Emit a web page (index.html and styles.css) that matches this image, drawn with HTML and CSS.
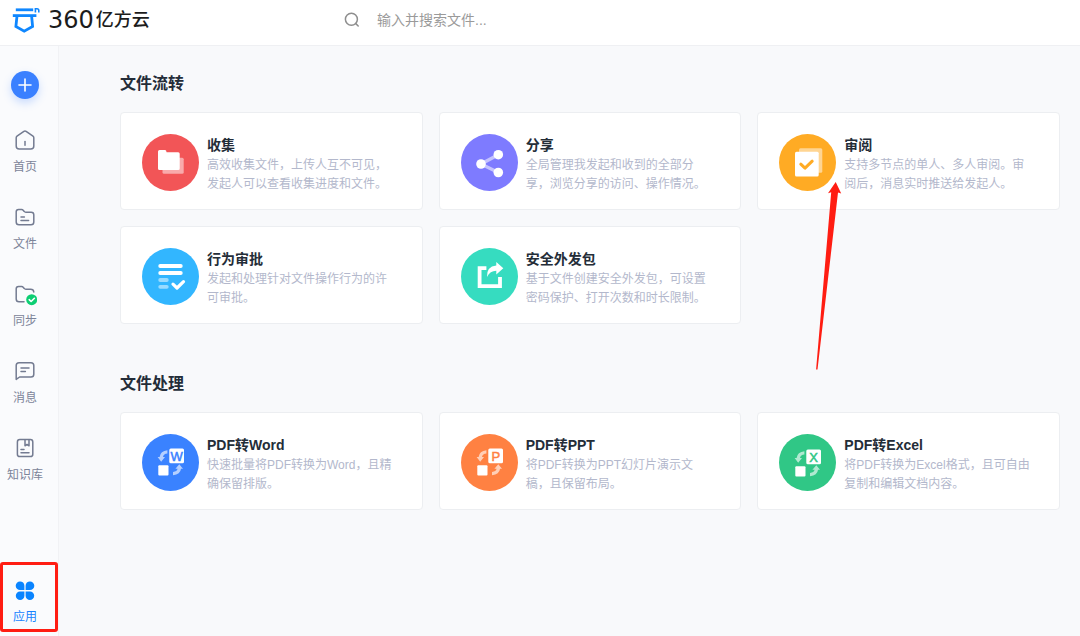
FILE: index.html
```html
<!DOCTYPE html>
<html lang="zh-CN">
<head>
<meta charset="utf-8">
<meta name="viewport" content="width=device-width, initial-scale=1">
<title>360亿方云</title>
<link rel="stylesheet" href="styles.css">
</head>
<body>
<header class="topbar">
  <a class="brand" href="#">
    <svg class="brand-mark" viewBox="0 0 28 26" aria-hidden="true">
      <g fill="none" stroke="#0f87ff" stroke-width="2.8">
        <path d="M3.8 2.8H21.2"/>
        <path d="M.8 8.6H24.4"/>
        <path d="M5 9L3.9 19.4L12.2 24.2L20.6 19.4L19.6 9"/>
        <path d="M23.4 5.4V1.8H25Q26.8 1.8 26.8 3.6V5.4" stroke-width="1.6"/>
      </g>
    </svg>
    <span class="brand-name"><span class="brand-digits">360</span>亿方云</span>
  </a>
  <form class="search" role="search">
    <label for="q" class="search-icon" aria-label="搜索">
      <svg viewBox="0 0 16 16" aria-hidden="true"><g fill="none" stroke="#8e8e8e" stroke-width="1.5" stroke-linecap="round"><circle cx="7.4" cy="7.2" r="6"/><path d="M11.8 11.6L14.2 14"/></g></svg>
    </label>
    <input id="q" type="text" placeholder="输入并搜索文件...">
  </form>
</header>
<div class="layout">
  <nav class="sidebar">
    <button class="add" type="button" aria-label="新建">
      <svg viewBox="0 0 28 28" aria-hidden="true"><path d="M8 14H20M14 8V20" stroke="#fff" stroke-width="1.6" stroke-linecap="round"/></svg>
    </button>
    <a class="nav-item" href="#">
      <svg viewBox="0 0 24 24" aria-hidden="true"><g class="line"><path d="M3.2 8.8Q3.2 7.8 4 7.2L10.9 2.4Q12 1.6 13.1 2.4L20 7.2Q20.8 7.8 20.8 8.8V17Q20.8 20 17.8 20H6.2Q3.2 20 3.2 17Z"/><path d="M12 12.6V16.2"/></g></svg>
      <span>首页</span>
    </a>
    <a class="nav-item" href="#">
      <svg viewBox="0 0 24 24" aria-hidden="true"><g class="line"><path d="M3.2 5.8Q3.2 3.4 5.6 3.4H8.6Q9.6 3.4 10.2 4.2L11.2 5.4Q11.8 6.2 12.8 6.2H18.2Q20.8 6.2 20.8 8.8V16Q20.8 18.8 18 18.8H6Q3.2 18.8 3.2 16Z"/><path d="M8 11H11.4M8 14.4H15.6"/></g></svg>
      <span>文件</span>
    </a>
    <a class="nav-item" href="#">
      <svg viewBox="0 0 24 24" aria-hidden="true"><g class="line"><path d="M11 18.8H6Q3.2 18.8 3.2 16V5.8Q3.2 3.4 5.6 3.4H8.6Q9.6 3.4 10.2 4.2L11.2 5.4Q11.8 6.2 12.8 6.2H17.6Q20.6 6.2 20.8 9"/></g><circle cx="18.7" cy="16.7" r="5.5" fill="#0dce73"/><path d="M16.2 16.7L18.1 18.5L21.4 15.3" fill="none" stroke="#fff" stroke-width="1.6" stroke-linecap="round" stroke-linejoin="round"/></svg>
      <span>同步</span>
    </a>
    <a class="nav-item" href="#">
      <svg viewBox="0 0 24 24" aria-hidden="true"><g class="line"><path d="M3.2 19.4V5.6Q3.2 2.8 6 2.8H18Q20.8 2.8 20.8 5.6V14.2Q20.8 17 18 17H6.6Z"/><path d="M8 8H16M8 11.4H12.4"/></g></svg>
      <span>消息</span>
    </a>
    <a class="nav-item" href="#">
      <svg viewBox="0 0 24 24" aria-hidden="true"><g class="line"><rect x="4.4" y="2.6" width="15.4" height="17" rx="2.4"/><path d="M12 2.8V8.8L14 7.4L16 8.8V2.8M8 12.6H11M8 15.8H16"/></g></svg>
      <span>知识库</span>
    </a>
    <a class="nav-item nav-item-active" href="#">
      <svg viewBox="0 0 24 24" aria-hidden="true"><g fill="#0a84ff"><path d="M7 2.4A4.3 4.3 0 0 1 11.4 6.7V11H7A4.3 4.3 0 0 1 7 2.4Z"/><path d="M17 2.4A4.3 4.3 0 0 1 17 11H12.6V6.7A4.3 4.3 0 0 1 17 2.4Z"/><path d="M7 12.4H11.4V16.7A4.3 4.3 0 1 1 7 12.4Z"/><path d="M12.6 12.4H17A4.3 4.3 0 1 1 12.6 16.7Z"/></g></svg>
      <span>应用</span>
    </a>
    <div class="highlight"></div>
  </nav>
  <main class="content">
    <section class="group">
      <h2>文件流转</h2>
      <div class="cards">
        <a class="card" href="#">
          <svg class="card-icon" viewBox="0 0 57 57" aria-hidden="true"><circle cx="28.5" cy="28.5" r="28.5" fill="#f25557"/><rect x="20.5" y="23.7" width="21.2" height="16" rx="1.5" fill="#fff" opacity=".5"/><path d="M16 17.5Q16 16 17.5 16H23Q24.3 16 24.6 18.3H36.2Q37.7 18.3 37.7 19.8V34.5Q37.7 36 36.2 36H17.5Q16 36 16 34.5Z" fill="#fff"/></svg>
          <div class="card-text"><h3>收集</h3><p>高效收集文件，上传人互不可见，发起人可以查看收集进度和文件。</p></div>
        </a>
        <a class="card" href="#">
          <svg class="card-icon" viewBox="0 0 57 57" aria-hidden="true"><circle cx="28.5" cy="28.5" r="28.5" fill="#7e7bff"/><path d="M37.3 20.7L20 30L37.3 38.5" fill="none" stroke="#fff" stroke-width="3.4" opacity=".55"/><g fill="#fff"><circle cx="20" cy="30" r="4.8"/><circle cx="37.3" cy="20.7" r="4.8"/><circle cx="37.3" cy="38.5" r="4.8"/></g></svg>
          <div class="card-text"><h3>分享</h3><p>全局管理我发起和收到的全部分享，浏览分享的访问、操作情况。</p></div>
        </a>
        <a class="card" href="#">
          <svg class="card-icon" viewBox="0 0 57 57" aria-hidden="true"><circle cx="28.5" cy="28.5" r="28.5" fill="#ffab24"/><rect x="20" y="14.3" width="23.3" height="24.4" rx="1.5" fill="#fff" opacity=".5"/><rect x="16" y="17.8" width="23.7" height="24.6" rx="1.5" fill="#fff"/><path d="M21.8 30.2L26 34.2L33.2 27.2" fill="none" stroke="#ffab24" stroke-width="3" stroke-linecap="round" stroke-linejoin="round"/></svg>
          <div class="card-text"><h3>审阅</h3><p>支持多节点的单人、多人审阅。审阅后，消息实时推送给发起人。</p></div>
          <svg class="pointer" viewBox="0 0 26 189" aria-hidden="true"><path d="M19.7 0L25.2 11.6L22 10.6L1.5 187.5L.1 187.5L15.2 10.2L12 11.2Z" fill="#ff1d12"/></svg>
        </a>
        <a class="card" href="#">
          <svg class="card-icon" viewBox="0 0 57 57" aria-hidden="true"><circle cx="28.5" cy="28.5" r="28.5" fill="#32b6ff"/><g fill="none" stroke="#fff" stroke-width="3.8" stroke-linecap="round" stroke-linejoin="round"><path d="M18.2 18H38.8M18.2 25H38.8"/><path d="M18.2 32H24.8M18.2 38.8H24.8" opacity=".5"/><path d="M31 36.2L35 40L41.5 33.6" stroke-width="3.2"/></g></svg>
          <div class="card-text"><h3>行为审批</h3><p>发起和处理针对文件操作行为的许可审批。</p></div>
        </a>
        <a class="card" href="#">
          <svg class="card-icon" viewBox="0 0 57 57" aria-hidden="true"><circle cx="28.5" cy="28.5" r="28.5" fill="#36dcc0"/><path d="M25.4 20.2H18.6V38.1H39V29" fill="none" stroke="#fff" stroke-width="3.8"/><path d="M35.3 14L42.3 20.2L35.3 26.4V22.8Q29 22.8 26 29Q25.3 18.4 35.3 17.4Z" fill="#fff"/></svg>
          <div class="card-text"><h3>安全外发包</h3><p>基于文件创建安全外发包，可设置密码保护、打开次数和时长限制。</p></div>
        </a>
      </div>
    </section>
    <section class="group">
      <h2>文件处理</h2>
      <div class="cards">
        <a class="card" href="#">
          <svg class="card-icon" viewBox="0 0 57 57" aria-hidden="true"><circle cx="28.5" cy="28.5" r="28.5" fill="#3a82ff"/><g fill="#fff"><rect x="27.3" y="14.4" width="14.7" height="14.8" rx="1.5"/><rect x="16.3" y="31.2" width="10.2" height="10.2" rx="1"/></g><g fill="#fff" opacity=".62"><path d="M25.4 16.2V19.4Q21.6 19.6 21 23H23L19.2 27.8L15.6 23H17.6Q18.4 16.8 25.4 16.2Z"/><path d="M31 41.2V38Q35 37.6 35.6 34.8H33.4L37.3 30.2L41 34.8H39Q38.4 40.8 31 41.2Z"/></g><text class="glyph" x="34.7" y="26.5" fill="#3a82ff" stroke="#3a82ff">W</text></svg>
          <div class="card-text"><h3>PDF转Word</h3><p>快速批量将PDF转换为Word，且精确保留排版。</p></div>
        </a>
        <a class="card" href="#">
          <svg class="card-icon" viewBox="0 0 57 57" aria-hidden="true"><circle cx="28.5" cy="28.5" r="28.5" fill="#ff8142"/><g fill="#fff"><rect x="27.3" y="14.4" width="14.7" height="14.8" rx="1.5"/><rect x="16.3" y="31.2" width="10.2" height="10.2" rx="1"/></g><g fill="#fff" opacity=".62"><path d="M25.4 16.2V19.4Q21.6 19.6 21 23H23L19.2 27.8L15.6 23H17.6Q18.4 16.8 25.4 16.2Z"/><path d="M31 41.2V38Q35 37.6 35.6 34.8H33.4L37.3 30.2L41 34.8H39Q38.4 40.8 31 41.2Z"/></g><text class="glyph" x="34.9" y="26.5" fill="#ff8142" stroke="#ff8142">P</text></svg>
          <div class="card-text"><h3>PDF转PPT</h3><p>将PDF转换为PPT幻灯片演示文稿，且保留布局。</p></div>
        </a>
        <a class="card" href="#">
          <svg class="card-icon" viewBox="0 0 57 57" aria-hidden="true"><circle cx="28.5" cy="28.5" r="28.5" fill="#30c786"/><g transform="translate(0 1)"><g fill="#fff"><rect x="27.3" y="14.4" width="14.7" height="14.8" rx="1.5"/><rect x="16.3" y="31.2" width="10.2" height="10.2" rx="1"/></g><g fill="#fff" opacity=".62"><path d="M25.4 16.2V19.4Q21.6 19.6 21 23H23L19.2 27.8L15.6 23H17.6Q18.4 16.8 25.4 16.2Z"/><path d="M31 41.2V38Q35 37.6 35.6 34.8H33.4L37.3 30.2L41 34.8H39Q38.4 40.8 31 41.2Z"/></g><text class="glyph" x="34.7" y="26.5" fill="#30c786" stroke="#30c786">X</text></g></svg>
          <div class="card-text"><h3>PDF转Excel</h3><p>将PDF转换为Excel格式，且可自由复制和编辑文档内容。</p></div>
        </a>
      </div>
    </section>
  </main>
</div>
</body>
</html>
```
FILE: styles.css
```css
* {
  box-sizing: border-box;
}

body {
  margin: 0;
  min-height: 100vh;
  display: flex;
  flex-direction: column;
  background: #f8f9fb;
  color: #242d38;
  font-family: "Liberation Sans", "Noto Sans CJK SC", sans-serif;
  font-size: 12px;
}

a {
  color: inherit;
  text-decoration: none;
}

h2,
h3,
p {
  margin: 0;
}

svg {
  display: block;
}

.topbar {
  display: flex;
  align-items: center;
  height: 46px;
  padding: 0 12px 6px;
  background: #fff;
  border-bottom: 1px solid #eff0f3;
}

.brand {
  display: flex;
  align-items: center;
  gap: 8px;
  width: 332px;
}

.brand-mark {
  width: 28px;
  height: 26px;
}

.brand-name {
  display: flex;
  align-items: center;
  gap: 2px;
  color: #1c1c1c;
  font-size: 18px;
  font-weight: 500;
  line-height: 24px;
}

.brand-digits {
  font-family: "DejaVu Sans", sans-serif;
  font-size: 24px;
}

.search {
  display: flex;
  align-items: center;
  flex: 1;
  gap: 17px;
}

.search-icon svg {
  width: 16px;
  height: 16px;
}

.search input {
  flex: 1;
  height: 28px;
  padding: 0;
  border: 0;
  outline: 0;
  background: transparent;
  color: #333;
  font-family: inherit;
  font-size: 14px;
}

.search input::placeholder {
  color: #9a9a9a;
}

.layout {
  display: flex;
  flex: 1;
}

.sidebar {
  position: relative;
  display: flex;
  flex-direction: column;
  align-items: center;
  gap: 30px;
  width: 59px;
  padding: 25px 8px 10px 0;
  background: #fafbfd;
  border-right: 1px solid #f1f2f5;
}

.add {
  width: 28px;
  height: 28px;
  padding: 0;
  border: 0;
  border-radius: 50%;
  background: #3a80ff;
  box-shadow: 0 4px 8px rgba(58, 128, 255, 0.25);
}

.nav-item {
  display: flex;
  flex-direction: column;
  align-items: center;
  gap: 5px;
  color: #7c8499;
  line-height: 18px;
}

.nav-item svg {
  width: 24px;
  height: 24px;
}

.line {
  fill: none;
  stroke: #737b91;
  stroke-width: 1.5;
  stroke-linecap: round;
  stroke-linejoin: round;
}

.nav-item-active {
  margin-top: auto;
  color: #1684ff;
}

.highlight {
  position: absolute;
  left: 0;
  right: 0;
  bottom: 4px;
  height: 70px;
  border: 3px solid #ff1d12;
  border-radius: 3px;
  pointer-events: none;
}

.content {
  flex: 1;
  padding: 25px 20px 25px 61px;
}

.group + .group {
  margin-top: 47px;
}

.group h2 {
  margin-bottom: 15px;
  font-size: 16px;
  line-height: 26px;
}

.cards {
  display: grid;
  grid-template-columns: repeat(3, 1fr);
  gap: 16px;
}

.card {
  position: relative;
  display: flex;
  align-items: flex-start;
  gap: 8px;
  padding: 21px 26px 15px 21px;
  background: #fff;
  border: 1px solid #eceef1;
  border-radius: 4px;
}

.card-icon {
  flex: none;
  width: 57px;
  height: 57px;
}

.card-text {
  flex: 1;
  padding-top: 1px;
}

.card h3 {
  font-size: 14px;
  line-height: 21px;
}

.card p {
  color: #b3b8cc;
  line-height: 19px;
  text-spacing-trim: space-all;
}

.glyph {
  font-family: "Liberation Sans", sans-serif;
  font-size: 13px;
  stroke-width: 0.5px;
  text-anchor: middle;
}

.pointer {
  position: absolute;
  left: 58px;
  top: 69px;
  width: 26px;
  height: 189px;
  z-index: 1;
  pointer-events: none;
}
```
